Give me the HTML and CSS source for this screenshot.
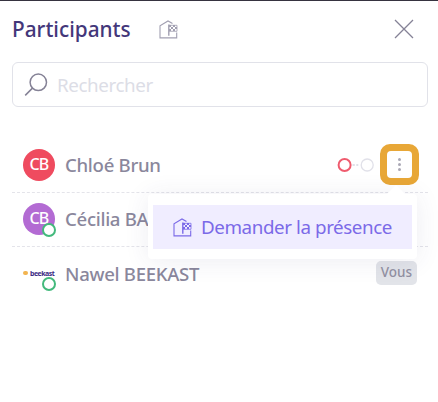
FILE: index.html
```
<!DOCTYPE html>
<html lang="fr">
<head>
    <meta charset="UTF-8">
    <meta name="viewport" content="width=device-width, initial-scale=1.0">
    <title>Participants</title>
    <link rel="stylesheet" href="styles.css">
</head>
<body>
    <svg class="defs" width="0" height="0">
        <symbol id="presence" viewBox="0 0 19 19">
            <path d="M6 17.9H1V5.8L9 1l4.5 2.6M6 17.9H17.7V12.5" fill="none" stroke="currentColor" stroke-width="1.1"/>
            <path d="M9.8 15.8V4.5" fill="none" stroke="currentColor" stroke-width="1.4"/>
            <path d="M10 5.3h8v6h-8" fill="none" stroke="currentColor" stroke-width=".8"/>
            <path d="M10 5h2v2h-2zM14 5h2v2h-2zM12 7h2v2h-2zM16 7h2v2h-2zM10 9h2v2h-2zM14 9h2v2h-2z" fill="currentColor"/>
        </symbol>
    </svg>
    <div class="panel">
        <div class="header">
            <h1>Participants</h1>
            <svg class="icon-presence" width="19" height="19"><use href="#presence"/></svg>
            <svg class="icon-close" width="20" height="20" viewBox="0 0 20 20"><path d="M1 1l18 18M19 1L1 19"/></svg>
        </div>
        <div class="search">
            <svg width="24" height="24" viewBox="0 0 24 24"><circle cx="14.3" cy="9.3" r="8.2"/><path d="M8.5 15.1L1.2 22.4"/></svg>
            <span>Rechercher</span>
        </div>
        <div class="list">
            <div class="row">
                <div class="avatar red">CB</div>
                <div class="name">Chloé Brun</div>
                <svg class="steps" width="38" height="16" viewBox="0 0 38 16">
                    <circle class="step-on" cx="7.6" cy="8" r="6"/>
                    <path d="M15.5 8h2.3M19.3 8h2"/>
                    <circle cx="30.2" cy="8" r="6"/>
                </svg>
                <div class="more">
                    <div class="dots"><i></i><i></i><i></i></div>
                    <div class="menu">
                        <div class="menu-item">
                            <svg width="19" height="19"><use href="#presence"/></svg>
                            <span>Demander la présence</span>
                        </div>
                    </div>
                </div>
            </div>
            <div class="row">
                <div class="avatar purple">CB<span class="status"></span></div>
                <div class="name">Cécilia BARON</div>
            </div>
            <div class="row">
                <div class="avatar logo"><b></b>beekast<span class="status"></span></div>
                <div class="name">Nawel BEEKAST</div>
                <div class="badge">Vous</div>
            </div>
        </div>
    </div>
</body>
</html>
```
FILE: styles.css
```
* {
    box-sizing: border-box;
}
body {
    margin: 0;
    font-family: "Noto Sans", sans-serif;
    background-color: #ffffff;
    color: #8a879c;
}
svg {
    display: block;
    flex: none;
    fill: none;
}
.defs {
    position: absolute;
}
.panel {
    height: 402px;
    padding: 0 10px 0 12px;
    border-top: 1px solid #363340;
    overflow: hidden;
}
.header {
    display: flex;
    align-items: center;
    height: 56px;
    padding-right: 14px;
}
h1 {
    width: 147px;
    margin: 0;
    padding-bottom: 1px;
    font-size: 20.8px;
    font-weight: 500;
    color: #43377a;
}
.icon-presence {
    color: #a19fb1;
}
.icon-close {
    margin-left: auto;
    stroke: #858296;
    stroke-width: 1.3;
}
.search {
    display: flex;
    align-items: center;
    height: 45px;
    margin: 5px 0 32px;
    padding-left: 11px;
    border: 1px solid #e1e2e9;
    border-radius: 6px;
    font-size: 18.8px;
    letter-spacing: -0.4px;
    color: #dcdde6;
}
.search svg {
    margin-right: 9px;
    stroke: #858296;
    stroke-width: 1.5;
}
.row {
    display: flex;
    align-items: center;
    height: 54px;
    padding: 0 12px 2px 11px;
    border-bottom: 1px dashed #e4e4ea;
}
.row:last-child {
    border-bottom: none;
}
.avatar {
    position: relative;
    width: 32px;
    height: 32px;
    margin-right: 10px;
    border-radius: 50%;
    font-size: 16px;
    font-weight: 500;
    line-height: 31px;
    letter-spacing: -0.8px;
    text-align: center;
    color: #ffffff;
}
.red {
    background-color: #ef4b5f;
}
.purple {
    background-color: #b36bd3;
}
.logo {
    display: flex;
    align-items: center;
    gap: 2px;
    font-size: 7px;
    font-weight: 700;
    letter-spacing: -0.5px;
    color: #3d2b83;
}
.logo b {
    flex: none;
    width: 5px;
    height: 4px;
    border-radius: 2px;
    background-color: #f2b450;
}
.status {
    position: absolute;
    right: -1px;
    bottom: -2px;
    width: 14px;
    height: 14px;
    border: 2px solid #43b97c;
    border-radius: 50%;
    background-color: #ffffff;
}
.name {
    font-size: 18.6px;
    font-weight: 500;
    letter-spacing: -0.3px;
    white-space: nowrap;
}
.steps {
    margin: 0 5px 0 auto;
    stroke: #e1e1e9;
    stroke-width: 1.3;
}
.steps path {
    stroke-width: 2;
}
.steps .step-on {
    stroke: #ef5b6e;
    stroke-width: 2;
}
.more {
    position: relative;
    flex: none;
    width: 39px;
    height: 41px;
    margin-right: -3px;
    border: 7px solid #e8a737;
    border-radius: 10px;
    background-color: #e8a737;
}
.dots {
    display: flex;
    flex-direction: column;
    align-items: center;
    justify-content: center;
    gap: 2px;
    height: 27px;
    border-radius: 4px;
    background-color: #ffffff;
}
.dots i {
    width: 3px;
    height: 3px;
    border-radius: 50%;
    background-color: #aaa8b5;
}
.menu {
    position: absolute;
    z-index: 1;
    top: 43px;
    right: -5px;
    width: 269px;
    height: 65px;
    padding: 11px 5px 10px;
    border-radius: 4px;
    background-color: #ffffff;
    box-shadow: 0 2px 26px rgba(60, 50, 110, 0.09);
}
.menu::before {
    content: "";
    position: absolute;
    top: -9px;
    right: 12px;
    border: 9px solid transparent;
    border-top: 0;
    border-bottom-color: #ffffff;
}
.menu-item {
    display: flex;
    align-items: center;
    height: 44px;
    padding-left: 20px;
    background-color: #f0edff;
    font-size: 18.8px;
    letter-spacing: -0.42px;
    color: #7b6ae8;
    white-space: nowrap;
}
.menu-item svg {
    margin-right: 9px;
}
.badge {
    height: 24px;
    margin-left: auto;
    margin-right: -1px;
    padding: 0 5px;
    border-radius: 5px;
    background-color: #e2e4e9;
    font-size: 13.5px;
    font-weight: 500;
    line-height: 22px;
    color: #9291a2;
}
```
